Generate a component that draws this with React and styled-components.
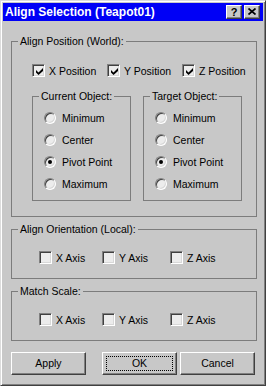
import styled, {createGlobalStyle} from "styled-components"

const Global = createGlobalStyle`
  html, body {
    margin: 0;
    padding: 0;
    background: #fff;
  }
  body {
    font-family: "Liberation Sans", Arial, sans-serif;
    font-size: 10.5px;
    color: #000;
  }
`

const Window = styled.div`
  width: 266px;
  height: 386px;
  box-sizing: border-box;
  background: #c8c8c8;
  border: 1px solid;
  border-color: #dcdcdc #404040 #404040 #dcdcdc;
  box-shadow: inset 1px 1px #fff, inset -1px -1px #808080;
  padding: 2px;
  display: flex;
  flex-direction: column;
`

const TitleBar = styled.div`
  height: 18px;
  background: #0000f6;
  display: flex;
  align-items: center;
  padding: 0 3px 0 2px;
`

const Title = styled.div`
  flex: 1;
  color: #fff;
  font-weight: bold;
  font-size: 12px;
  line-height: 18px;
  white-space: nowrap;
`

const CapButton = styled.div`
  width: 16px;
  height: 14px;
  box-sizing: border-box;
  margin-left: 2px;
  background: #c8c8c8;
  border: 1px solid;
  border-color: #fff #404040 #404040 #fff;
  box-shadow: inset -1px -1px #808080;
  display: flex;
  align-items: center;
  justify-content: center;
  font-weight: bold;
  font-size: 11px;
  line-height: 12px;
  padding-bottom: 1px;
`

const Body = styled.div`
  padding: 14px 6px 0 8px;
  display: flex;
  flex-direction: column;
`

const Group = styled.fieldset`
  margin: ${p => p.$top || 0}px 0 0 0;
  padding: 0;
  border: 1px solid #7c7c7c;
  min-width: 0;
  width: ${p => p.$width || 246}px;
  box-sizing: border-box;
`

const Legend = styled.legend`
  margin-left: 6px;
  padding: 0 2px;
  line-height: 13px;
  font-size: 10.5px;
`

const Content = styled.div`
  padding: ${p => p.$pad};
`

const CheckRow = styled.div`
  display: grid;
  grid-template-columns: ${p => p.$cols};
  height: 13px;
  align-items: center;
`

const CheckItem = styled.label`
  display: flex;
  align-items: center;
  gap: 4px;
  white-space: nowrap;
`

const Box = styled.span`
  width: 13px;
  height: 13px;
  box-sizing: border-box;
  background: #ececec;
  border: 1px solid;
  border-color: #808080 #fff #fff #808080;
  box-shadow: inset 1px 1px #404040, inset -1px -1px #d8d8d8;
  padding: 3px 0 0 3px;
  flex: none;
  svg {
    display: block;
  }
`

const GroupRow = styled.div`
  display: flex;
  gap: 12px;
  margin-top: 13px;
`

const RadioList = styled.div`
  padding: 4px 0 5px 11px;
`

const RadioItem = styled.div`
  height: 22px;
  display: flex;
  align-items: center;
  gap: 6px;
  white-space: nowrap;
`

const Radio = styled.span`
  width: 12px;
  height: 12px;
  box-sizing: border-box;
  border-radius: 50%;
  border: 1px solid;
  border-color: #808080 #fff #fff #808080;
  box-shadow: inset 1px 1px #404040, inset -1px -1px #d8d8d8;
  background: #ececec;
  display: flex;
  align-items: center;
  justify-content: center;
  flex: none;
  &::after {
    content: "";
    width: 4px;
    height: 4px;
    border-radius: 50%;
    background: ${p => (p.$on ? "#000" : "transparent")};
  }
`

const ButtonRow = styled.div`
  display: flex;
  margin-top: 11px;
`

const Button = styled.div`
  width: 75px;
  height: 23px;
  box-sizing: border-box;
  margin-left: ${p => p.$gap || 0}px;
  border: 1px solid;
  border-color: #fff #404040 #404040 #fff;
  box-shadow: inset -1px -1px #808080;
  display: flex;
  padding: 3px;
  font-size: 10.5px;
`

const Face = styled.span`
  flex: 1;
  display: flex;
  align-items: center;
  justify-content: center;
  border: 1px dotted ${p => (p.$focus ? "#000" : "transparent")};
  padding-bottom: 1px;
`

const Check = () => (
  <svg width="7" height="7" viewBox="0 0 7 7">
    <polygon points="0,2 2.5,4.5 7,0 7,3 2.5,7 0,4.5" fill="#000" />
  </svg>
)

const CloseIcon = () => (
  <svg width="8" height="7" viewBox="0 0 8 7">
    <path d="M0.5 0.5L7.5 6.5M7.5 0.5L0.5 6.5" stroke="#000" strokeWidth="1.7" />
  </svg>
)

const CheckBox = ({label, checked}) => (
  <CheckItem>
    <Box>{checked && <Check />}</Box>
    {label}
  </CheckItem>
)

const RadioGroup = ({title, value}) => (
  <Group $width={99}>
    <Legend>{title}</Legend>
    <RadioList>
      {["Minimum", "Center", "Pivot Point", "Maximum"].map(o => (
        <RadioItem key={o}>
          <Radio $on={o === value} />
          {o}
        </RadioItem>
      ))}
    </RadioList>
  </Group>
)

const AxisGroup = ({title}) => (
  <Group $top={6}>
    <Legend>{title}</Legend>
    <Content $pad="15px 0 14px 27px">
      <CheckRow $cols="63px 68px auto">
        <CheckBox label="X Axis" />
        <CheckBox label="Y Axis" />
        <CheckBox label="Z Axis" />
      </CheckRow>
    </Content>
  </Group>
)

export default function App() {
  return (
    <Window>
      <Global />
      <TitleBar>
        <Title>Align Selection (Teapot01)</Title>
        <CapButton>?</CapButton>
        <CapButton>
          <CloseIcon />
        </CapButton>
      </TitleBar>
      <Body>
        <Group>
          <Legend>Align Position (World):</Legend>
          <Content $pad="16px 0 15px 20px">
            <CheckRow $cols="75px 75px auto">
              <CheckBox label="X Position" checked />
              <CheckBox label="Y Position" checked />
              <CheckBox label="Z Position" checked />
            </CheckRow>
            <GroupRow>
              <RadioGroup title="Current Object:" value="Pivot Point" />
              <RadioGroup title="Target Object:" value="Pivot Point" />
            </GroupRow>
          </Content>
        </Group>
        <AxisGroup title="Align Orientation (Local):" />
        <AxisGroup title="Match Scale:" />
        <ButtonRow>
          <Button>
            <Face>Apply</Face>
          </Button>
          <Button $gap={16}>
            <Face $focus>OK</Face>
          </Button>
          <Button $gap={3}>
            <Face>Cancel</Face>
          </Button>
        </ButtonRow>
      </Body>
    </Window>
  )
}
